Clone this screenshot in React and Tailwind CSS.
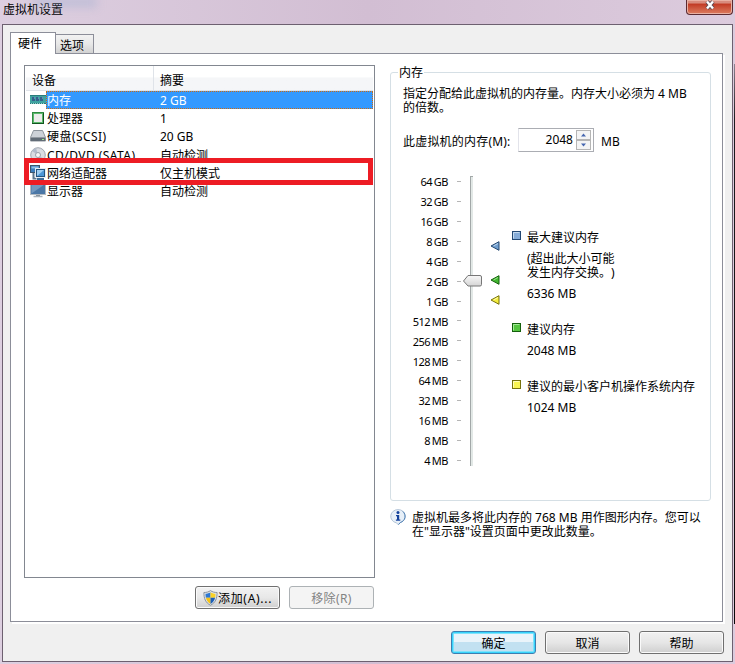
import { useState } from "react";

const devices = [
  { id: "memory", name: "内存", summary: "2 GB", icon: MemoryIcon },
  { id: "cpu", name: "处理器", summary: "1", icon: CpuIcon },
  { id: "disk", name: "硬盘(SCSI)", summary: "20 GB", icon: DiskIcon },
  { id: "cd", name: "CD/DVD (SATA)", summary: "自动检测", icon: CdIcon },
  { id: "net", name: "网络适配器", summary: "仅主机模式", icon: NetworkIcon },
  { id: "display", name: "显示器", summary: "自动检测", icon: DisplayIcon },
];

// names with latin letters are set a little wider
const wideNames = ["disk", "cd"];

const scale = [
  "64 GB", "32 GB", "16 GB", "8 GB", "4 GB", "2 GB", "1 GB", "512 MB",
  "256 MB", "128 MB", "64 MB", "32 MB", "16 MB", "8 MB", "4 MB",
];

function MemoryIcon() {
  return (
    <svg width="16" height="16" viewBox="0 0 16 16" shapeRendering="crispEdges">
      <path d="M0 3h16v9H0z" fill="#3fa3a0" />
      <path d="M0 3h16v1H0zM0 11h16v1H0z" fill="#287b7b" />
      <path d="M2 5h3v4H2zM6 5h3v4H6zM10 5h3v4h-3z" fill="#35608c" />
      <path d="M4 5h1v2H4zM8 5h1v2H8zM12 5h1v2h-1z" fill="#5f8fb4" />
      <path d="M1 11h1v1H1zM3 11h1v1H3zM5 11h1v1H5zM7 11h1v1H7zM9 11h1v1H9zM11 11h1v1h-1zM13 11h1v1h-1z" fill="#8ed0c8" />
    </svg>
  );
}

function CpuIcon() {
  return (
    <svg width="16" height="16" viewBox="0 0 16 16">
      <rect x="2.5" y="2.5" width="11" height="11" fill="#5cb96c" stroke="#2f8a42" />
      <rect x="4" y="4" width="8" height="8" fill="#ececec" />
      <path d="M2 13.5h12M13.5 3v11" stroke="#12561f" />
    </svg>
  );
}

function DiskIcon() {
  return (
    <svg width="16" height="16" viewBox="0 0 16 16">
      <path d="M3.500 2.500h9l3 7v3.500H.5V9.500z" fill="#c1c6cc" stroke="#8b939b" />
      <path d="M4 3h8l2.600 6H1.400z" fill="#cdd2d8" />
      <path d="M1 9.500h14v3.500H1z" fill="#626c77" />
      <path d="M12 11.500h2" stroke="#9df28b" />
    </svg>
  );
}

function CdIcon() {
  return (
    <svg width="16" height="16" viewBox="0 0 16 16">
      <circle cx="8" cy="8" r="7.300" fill="#d9dce2" stroke="#a1a7b0" />
      <path d="M8 8 2 4a7 7 0 0 1 4-3zM8 8l6 4a7 7 0 0 1-4 3z" fill="#b3bccb" />
      <circle cx="8" cy="8" r="2.500" fill="#f7f7f7" stroke="#9aa1aa" />
    </svg>
  );
}

function NetworkIcon() {
  return (
    <svg width="16" height="16" viewBox="0 0 16 16">
      <rect x=".5" y=".5" width="9" height="7" fill="#3b7fbd" stroke="#3c556c" />
      <path d="M1.500 1.500h7v2h-7z" fill="#8fc1e8" />
      <path d="M3.500 8v5.500h3" stroke="#5d788e" strokeWidth="2" fill="none" />
      <rect x="5.500" y="3.500" width="10" height="9" fill="#4b96d6" stroke="#e6edf3" />
      <rect x="6.500" y="4.500" width="8" height="7" fill="#4b96d6" stroke="#24547e" />
      <path d="M7 5h7l-7 6z" fill="#9ccdf1" />
      <path d="M7 14h7" stroke="#3d6e9a" strokeWidth="2" />
    </svg>
  );
}

function DisplayIcon() {
  return (
    <svg width="16" height="16" viewBox="0 0 16 16">
      <rect x=".5" y=".5" width="15" height="11" fill="#4b77a6" stroke="#b2bac2" />
      <path d="M1.500 1.500h13l-13 9z" fill="#7398bf" />
      <path d="M6 12h4v1.500H6z" fill="#7e8993" />
      <path d="M3.500 13.500h9" stroke="#a8b1b9" strokeWidth="1.500" />
    </svg>
  );
}

function ShieldIcon() {
  return (
    <svg width="15" height="16" viewBox="0 0 15 16" className="shrink-0">
      <path d="M7.500.6C5.600 2 3.500 2.500.9 2.500c0 6 1.400 10 6.600 12.800C12.700 12.500 14.100 8.500 14.100 2.500c-2.600 0-4.700-.5-6.600-1.900z" fill="#dfe4e9" stroke="#8a939c" />
      <path d="M7.500 2.200C6 3.200 4.500 3.600 2.500 3.800c0 1.500.1 2.800.4 4h4.600z" fill="#2e78d2" />
      <path d="M7.500 2.200c1.500 1 3 1.400 5 1.600 0 1.500-.1 2.800-.4 4H7.500z" fill="#fbd224" />
      <path d="M2.900 7.800c.7 2.700 2 4.600 4.600 6.100V7.800z" fill="#f6c314" />
      <path d="M12.100 7.800c-.7 2.700-2 4.600-4.600 6.100V7.800z" fill="#1c5fb8" />
    </svg>
  );
}

function InfoIcon() {
  return (
    <svg width="16" height="16" viewBox="0 0 16 16" className="shrink-0">
      <path d="M8 .6a7.200 6.700 0 0 1 2.300 13L8.500 15.700 6.200 13.800A7.200 6.700 0 0 1 8 .6z" fill="#e8f0f8" stroke="#b3c5d8" />
      <path d="M12.800 2.500a7 6.500 0 0 1-2.500 11L8.500 15.500" fill="none" stroke="#4c7fb4" />
      <circle cx="8" cy="3.600" r="1.500" fill="#15429c" />
      <path d="M6 6h3.200v4.500h1.100v1.200H5.900v-1.200H7V7.200H6z" fill="#15429c" />
    </svg>
  );
}

function Marker({ fill, stroke, light }) {
  return (
    <svg width="10" height="10" viewBox="0 0 10 10" className="block">
      <path d="M9 .7v8.600L1 5z" fill={fill} stroke={stroke} />
      <path d="M8 2.500 3.500 5" stroke={light} />
    </svg>
  );
}

function Swatch({ fill, stroke, light }) {
  return (
    <svg width="9" height="9" viewBox="0 0 9 9" className="mt-px shrink-0">
      <rect x=".5" y=".5" width="8" height="8" fill={fill} stroke={stroke} />
      <path d="M1.500 7.500v-6h6" stroke={light} fill="none" />
    </svg>
  );
}

function DialogButton({ children, primary }) {
  return (
    <button
      className={
        primary
          ? "h-[23px] w-[85px] rounded-[3px] border border-[#3c7fb1] bg-linear-to-b from-[#eaf4fa] from-50% to-[#c2e1f1] to-50% pt-0.5 leading-none shadow-[inset_0_0_0_1px_#37d3fb,inset_0_0_0_2px_#7fe2fb]"
          : "h-[23px] w-[85px] rounded-[3px] border border-[#707070] bg-linear-to-b from-[#f1f1f1] via-[#e6e6e6] to-[#cfcfcf] pt-0.5 leading-none shadow-[inset_0_0_0_1px_#fafafa]"
      }
    >
      {children}
    </button>
  );
}

function DeviceList() {
  const [selected, setSelected] = useState("memory");

  return (
    <div className="relative h-[513px] w-[351px] border border-[#828790] bg-white">
      <div className="mx-px flex h-[25px] items-center border-b border-[#dfe3e9] bg-linear-to-b from-white from-45% to-[#f5f6f8] to-50%">
        <div className="flex h-full w-32 items-center border-r border-[#dfe3e9] pt-1.5 pl-1.5">设备</div>
        <div className="pt-1.5 pl-1.5">摘要</div>
      </div>
      {devices.map(({ id, name, summary, icon: Icon }) => (
        <div key={id} className="flex h-[18.200px] items-center pl-[5px]" onClick={() => setSelected(id)}>
          <Icon />
          <div
            className={
              selected === id
                ? "flex h-[18px] w-[327px] items-center border border-dotted border-[#cc6a11] bg-[#3399ff] pt-0.5 text-white"
                : "flex h-[18px] w-[327px] items-center pt-0.5 pl-px"
            }
          >
            <div className={wideNames.includes(id) ? "w-[113px] tracking-[0.45px]" : "w-[113px]"}>{name}</div>
            <div>{summary}</div>
          </div>
        </div>
      ))}
      <div className="pointer-events-none absolute top-[92px] -left-px h-[27px] w-[349px] border-5 border-[#ed1c24]" />
    </div>
  );
}

function MemorySlider() {
  return (
    <div className="flex h-[290px]">
      <div className="flex w-[50px] flex-col items-end text-[11px] tracking-[-0.5px] whitespace-nowrap [word-spacing:-0.5px]">
        {scale.map((label) => (
          <div key={label} className="flex h-[19.930px] w-full shrink-0 items-center justify-end pb-[7px]">
            {label}
          </div>
        ))}
      </div>
      <div className="flex w-[22px] flex-col items-start pl-[9px]">
        {scale.map((label) => (
          <div key={label} className="flex h-[19.930px] shrink-0 items-start pt-[5px]">
            <div className="h-px w-1 bg-[#b5b5b5]" />
          </div>
        ))}
      </div>
      <div className="relative h-[290px] w-[3px] border-t border-l border-[#a2a8a8] bg-[#e2e8e6]">
        <svg width="19" height="12" viewBox="0 0 19 12" className="absolute top-[98px] -left-2">
          <defs>
            <linearGradient id="thumb" x1="0" y1="0" x2="0" y2="1">
              <stop offset="0" stopColor="#f8f8f8" />
              <stop offset="1" stopColor="#d5d5d5" />
            </linearGradient>
          </defs>
          <path d="M5 .5h12a1.500 1.500 0 0 1 1.500 1.500v7.500a1.500 1.500 0 0 1-1.500 1.500H5L.5 6z" fill="url(#thumb)" stroke="#777" />
        </svg>
      </div>
      <div className="ml-[17px] flex w-[10px] flex-col pt-[65px]">
        <Marker fill="#709fd0" stroke="#24476f" light="#bdd5ee" />
        <div className="mt-6"><Marker fill="#42b72f" stroke="#14600c" light="#9ae48d" /></div>
        <div className="mt-[10px]"><Marker fill="#f4ed3d" stroke="#77720c" light="#fffcb0" /></div>
      </div>
      <div className="ml-3 pt-[54px] leading-[14px] whitespace-nowrap">
        <div className="flex gap-1.5">
          <Swatch fill="#86acd8" stroke="#234873" light="#c5daef" />
          <div className="h-[62px] pt-px">
            <div>最大建议内存</div>
            <div className="mt-[7px] [text-spacing-trim:space-all]">
              <div>(超出此大小可能</div>
              <div>发生内存交换。)</div>
            </div>
            <div className="mt-[7px]">6336 MB</div>
          </div>
        </div>
        <div className="mt-[30px] flex gap-1.5">
          <Swatch fill="#55c640" stroke="#14600c" light="#a5e99a" />
          <div className="pt-px">
            <div>建议内存</div>
            <div className="mt-[7px]">2048 MB</div>
          </div>
        </div>
        <div className="mt-[21px] flex gap-1.5">
          <Swatch fill="#f9f450" stroke="#77720c" light="#fffdb8" />
          <div className="pt-px">
            <div>建议的最小客户机操作系统内存</div>
            <div className="mt-[7px]">1024 MB</div>
          </div>
        </div>
      </div>
    </div>
  );
}

function MemoryPanel() {
  const [memory, setMemory] = useState("2048");

  return (
    <div className="w-[321px]">
      <fieldset className="h-[436px] w-[321px] min-w-0 rounded-[3px] border border-[#d5dfe5] pl-3">
        <legend className="-ml-[5px] h-[14px] px-px pt-px leading-[14px]">内存</legend>
        <div className="pt-2 leading-[14px] whitespace-nowrap">
          <div>指定分配给此虚拟机的内存量。内存大小必须为 4 MB</div>
          <div>的倍数。</div>
        </div>
        <div className="mt-[13px] flex h-6 items-center">
          <div className="w-[115px] pt-1 tracking-[0.2px] whitespace-nowrap">此虚拟机的内存(M):</div>
          <div className="flex h-6 w-[76px] items-center border border-[#e2e3ea] border-t-[#abadb3] border-r-[#abadb3] border-b-[#abadb3]">
            <input
              value={memory}
              onChange={(e) => setMemory(e.target.value)}
              className="w-[54px] min-w-0 text-right outline-none"
            />
            <div className="ml-[3px]">
              <svg width="15" height="20" viewBox="0 0 15 20" className="block">
                <rect x=".5" y=".5" width="14" height="9" fill="#f4f4f4" stroke="#b5b5b5" />
                <rect x=".5" y="10.500" width="14" height="9" fill="#f4f4f4" stroke="#b5b5b5" />
                <path d="M5 6.500h5L7.500 3.500zM5 13.500h5l-2.500 3z" fill="#4566b0" />
              </svg>
            </div>
          </div>
          <div className="ml-[7px] pt-[3px]">MB</div>
        </div>
        <div className="-ml-[5px] pt-6">
          <MemorySlider />
        </div>
      </fieldset>
      <div className="mt-2 flex gap-1.5 leading-[14px] whitespace-nowrap">
        <InfoIcon />
        <div className="pt-0.5">
          <div>虚拟机最多将此内存的 768 MB 用作图形内存。您可以</div>
          <div>在"显示器"设置页面中更改此数量。</div>
        </div>
      </div>
    </div>
  );
}

export default function App() {
  return (
    <div className="flex h-[664px] w-[735px] flex-col overflow-hidden bg-linear-to-r from-[#ddcfe0] via-[#d2bed3] to-[#dccbdd] font-['Noto_Sans','Noto_Sans_CJK_SC',sans-serif] text-[12px] text-black">
      <div className="flex h-6 shrink-0 items-start justify-between pr-0.5 pl-[3px]">
        <div className="relative pt-[3px] leading-[14px]">
          虚拟机设置
          <div className="absolute -top-1 left-[30px] h-3 w-16 bg-[#8fa6cc]/30 blur-[4px]" />
        </div>
        <button className="flex h-[15px] w-[47px] items-start justify-center rounded-b-[4px] border border-t-0 border-[#5b2a32] bg-linear-to-b from-[#d88b7d] from-20% via-[#c23a24] via-30% to-[#dc7c60] shadow-[inset_0_0_0_1px_#e9b0a3]">
          <svg width="12" height="10" viewBox="0 0 12 10">
            <path d="m3 1.500 6 7m0-7-6 7" stroke="#5b4a55" strokeWidth="4.200" />
            <path d="m3 1.500 6 7m0-7-6 7" stroke="#fff" strokeWidth="2.400" />
          </svg>
        </button>
      </div>

      <div className="flex min-h-0 flex-1">
        <div className="mb-0.5 ml-0.5 h-[638px] w-[731px] shrink-0 border border-[#6d6070] bg-[#f0f0f0] pt-[7px] pl-[7px]">
          {/* tabs */}
          <div className="flex h-[21px] items-end">
            <div className="z-10 -mb-px flex h-[22px] w-[46px] justify-center border border-b-0 border-[#8c8e99] bg-white pt-1 pr-1.5 leading-[14px]">硬件</div>
            <div className="flex h-[19px] w-[38px] justify-center border border-b-0 border-l-0 border-[#8c8e99] bg-linear-to-b from-[#f2f2f2] via-[#e8e8e8] to-[#d2d2d2] pt-1 pr-[5px] leading-[14px]">选项</div>
          </div>

          <div className="h-[569px] w-[713px] border border-[#8c8e99] bg-white shadow-[2px_2px_0_#fff]">
            <div className="flex gap-[15px] pt-[11px] pl-[13px]">
              <div>
                <DeviceList />
                <div className="mt-2 flex justify-end gap-[9px] pr-px">
                  <button className="flex h-[23px] w-[85px] items-center justify-center rounded-[3px] border border-[#707070] bg-linear-to-b from-[#f2f2f2] via-[#e8e8e8] to-[#cfcfcf] whitespace-nowrap shadow-[inset_0_0_0_1px_#fafafa]">
                    <ShieldIcon />
                    <span className="pt-0.5 tracking-[0.7px]">添加(A)...</span>
                  </button>
                  <button disabled className="h-[23px] w-[85px] rounded-[3px] border border-[#adb2b5] bg-[#f4f4f4] pt-0.5 leading-none tracking-[0.4px] text-[#838383]">
                    移除(R)
                  </button>
                </div>
              </div>
              <MemoryPanel />
            </div>
          </div>

          <div className="mt-[9px] flex justify-end gap-[9px] pr-2">
            <DialogButton primary>确定</DialogButton>
            <DialogButton>取消</DialogButton>
            <DialogButton>帮助</DialogButton>
          </div>
        </div>
        <div className="mt-10 ml-px h-[560px] w-px bg-linear-to-b from-[#8d8491] via-[#1c1c1f] via-10% to-[#0a0a0a]" />
      </div>
    </div>
  );
}
